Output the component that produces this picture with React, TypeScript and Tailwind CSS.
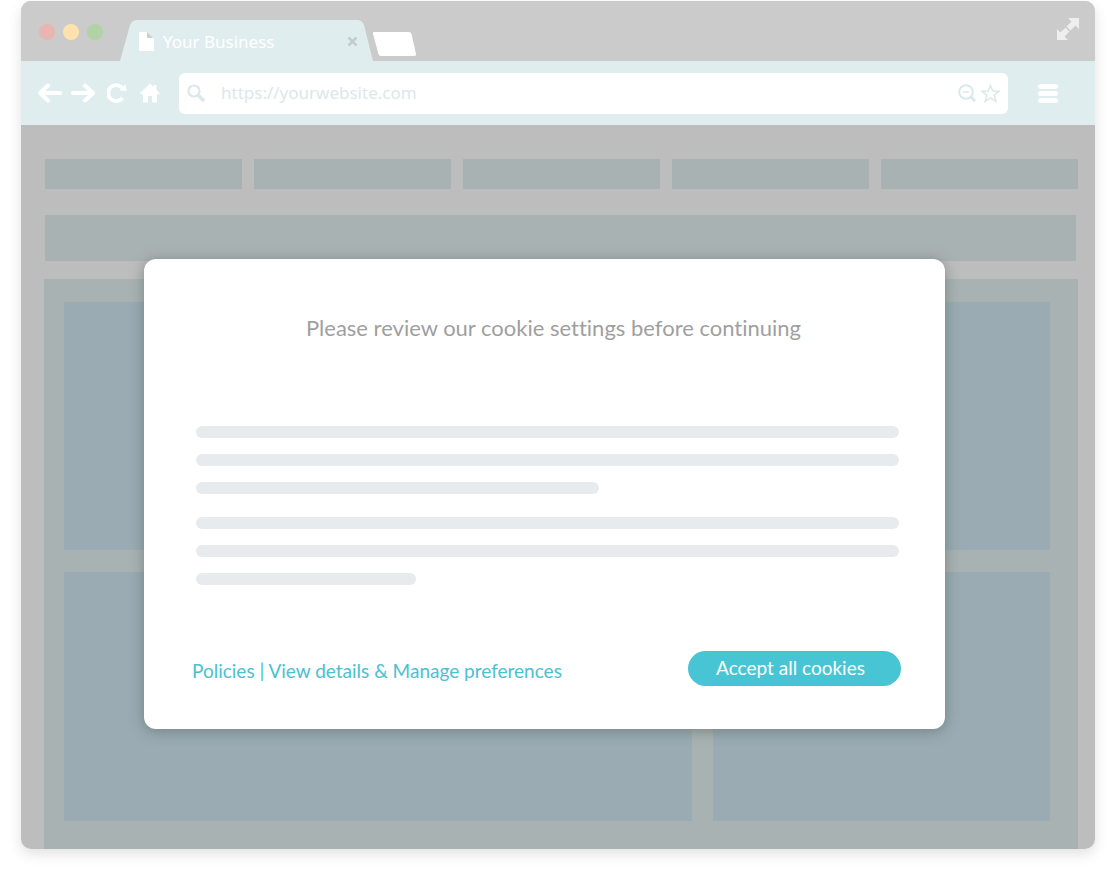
import type { JSX } from "react";

const NAV_ITEMS = ["one", "two", "three", "four", "five"];

const PARAGRAPHS = [
  ["w-full", "w-full", "w-[403px]"],
  ["w-full", "w-full", "w-[220px]"],
];

function TabStrip(): JSX.Element {
  return (
    <div className="flex h-[60px] items-end bg-[#cbcbcb] pl-[18px]">
      <div className="flex gap-2 self-start pt-[23px]">
        <span className="size-4 rounded-full bg-[#e9b5b0]" />
        <span className="size-4 rounded-full bg-[#fde2ae]" />
        <span className="size-4 rounded-full bg-[#b2d1a5]" />
      </div>

      {/* Active tab */}
      <div className="relative ml-[17px] h-[41px] w-[253px]">
        <svg className="absolute inset-0 size-full" viewBox="0 0 253 41" aria-hidden="true">
          <path d="M0 41 L10 5 Q12 0 17 0 H237 Q242 0 244 5 L253 41 Z" fill="#e0edef" />
        </svg>
        <div className="relative flex h-full items-center pt-[2px] pl-[19px]">
          <svg className="mr-[9px] h-[19px] w-[15px]" viewBox="0 0 15 19" aria-hidden="true">
            <path d="M0 0 H8 V6 H15 V19 H0 Z" fill="#fff" />
            <path d="M8 0 L14 6 H8 Z" fill="#cbd0d0" />
          </svg>
          <span className="font-['Noto_Sans','Open_Sans',sans-serif] text-[17px] text-white">
            Your Business
          </span>
          <button type="button" aria-label="Close tab" className="absolute top-4 left-[227px]">
            <svg className="size-[11px]" viewBox="0 0 11 11" aria-hidden="true">
              <path d="M1.5 1.5 L9.5 9.5 M9.5 1.5 L1.5 9.5" stroke="#c5cccd" strokeWidth="2.5" />
            </svg>
          </button>
        </div>
      </div>

      <button type="button" aria-label="New tab" className="mb-[5px]">
        <svg className="h-6 w-[43px]" viewBox="0 0 43 24" aria-hidden="true">
          <path d="M1 0 H36 Q38 0 38.500 2 L43 22 Q43.300 24 41 24 H8 Q6 24 5.500 22 L0 2 Q-.5 0 1 0 Z" fill="#fff" />
        </svg>
      </button>

      <button type="button" aria-label="Full screen" className="mr-4 mb-[21px] ml-auto">
        <svg className="size-[22px]" viewBox="0 0 22 22" aria-hidden="true">
          <path
            d="M11 0 H22 V11 L18.500 7.500 L13.500 12.500 L9.500 8.500 L14.500 3.500 Z M0 11 L3.500 14.500 L8.500 9.500 L12.500 13.500 L7.500 18.500 L11 22 H0 Z"
            fill="#eeeeee"
          />
          <path d="M8 9 L13 14" stroke="#d8d8d8" strokeWidth="1" />
        </svg>
      </button>
    </div>
  );
}

function Toolbar(): JSX.Element {
  return (
    <div className="flex h-16 items-center bg-[#e0edef] pr-[37px] pl-4">
      <div className="flex items-center gap-[9px] text-white">
        <button type="button" aria-label="Back">
          <svg className="h-5 w-[25px]" viewBox="0 0 25 20" fill="none" stroke="currentColor" strokeWidth="4" strokeLinecap="round" strokeLinejoin="round" aria-hidden="true">
            <path d="M23 10 H4" />
            <path d="M11 2.500 L3 10 L11 17.500" />
          </svg>
        </button>
        <button type="button" aria-label="Forward">
          <svg className="h-5 w-[25px]" viewBox="0 0 25 20" fill="none" stroke="currentColor" strokeWidth="4" strokeLinecap="round" strokeLinejoin="round" aria-hidden="true">
            <path d="M2 10 H21" />
            <path d="M14 2.500 L22 10 L14 17.500" />
          </svg>
        </button>
        <button type="button" aria-label="Reload" className="ml-[2px]">
          <svg className="size-5" viewBox="0 0 20 20" aria-hidden="true">
            <path d="M15.500 15 A8 8 0 1 1 15 4.500" fill="none" stroke="currentColor" strokeWidth="3.800" />
            <path d="M18.500 1 L19.500 8 L12.500 7.500 Z" fill="currentColor" />
          </svg>
        </button>
        <button type="button" aria-label="Home" className="ml-1">
          <svg className="size-5" viewBox="0 0 20 20" fill="currentColor" aria-hidden="true">
            <path d="M10 .5 L13.500 4 V2 H16.500 V7 L20 10.500 L18.500 11.500 L17 10.500 V19.500 H12 V13 H8 V19.500 H3 V10.500 L1.500 11.500 L0 10.500 Z" />
          </svg>
        </button>
      </div>

      <div className="ml-[19px] flex h-[41px] flex-1 items-center rounded-md bg-white px-2 text-[#dbe8ea]">
        <svg className="size-[19px]" viewBox="0 0 19 19" fill="none" stroke="currentColor" aria-hidden="true">
          <circle cx="7" cy="7" r="5.500" strokeWidth="2.200" />
          <path d="M11.500 11.500 L17 17" strokeWidth="3.500" />
        </svg>
        <input
          type="text"
          aria-label="Address"
          defaultValue="https://yourwebsite.com"
          className="ml-[15px] min-w-0 flex-1 bg-transparent font-['Noto_Sans','Open_Sans',sans-serif] text-[17px] outline-none"
        />
        <button type="button" aria-label="Zoom out">
          <svg className="size-[18px]" viewBox="0 0 18 18" fill="none" stroke="currentColor" aria-hidden="true">
            <circle cx="8" cy="8" r="6.800" strokeWidth="2" />
            <path d="M5 8 H11" strokeWidth="1.500" />
            <path d="M13 13 L17 17" strokeWidth="3" />
          </svg>
        </button>
        <button type="button" aria-label="Bookmark" className="ml-[5px]">
          <svg className="size-[19px]" viewBox="0 0 19 19" fill="none" stroke="currentColor" strokeWidth="1.500" aria-hidden="true">
            <path d="M9.500 1.500 L11.800 7 L18 7.300 L13.200 11.100 L14.900 17.300 L9.500 13.900 L4.100 17.300 L5.800 11.100 L1 7.300 L7.200 7 Z" />
          </svg>
        </button>
      </div>

      <button type="button" aria-label="Menu" className="ml-[30px] flex w-5 flex-col gap-[2px]">
        <span className="h-[5px] w-full rounded-sm bg-white" />
        <span className="h-[5px] w-full rounded-sm bg-white" />
        <span className="h-[5px] w-full rounded-sm bg-white" />
      </button>
    </div>
  );
}

function PageSkeleton(): JSX.Element {
  return (
    <div className="pt-[34px] pr-[17px] pl-6">
      <div className="flex gap-3">
        {NAV_ITEMS.map((item) => (
          <div key={item} className="h-[30px] flex-1 bg-[#a9b2b3]" />
        ))}
      </div>
      <div className="mt-[26px] mr-[2px] h-[46px] bg-[#a9b2b3]" />
      <div className="mt-[18px] -ml-px grid grid-cols-[628fr_337fr] gap-x-[21px] gap-y-[22px] bg-[#a9b2b3] pt-[23px] pr-7 pb-7 pl-5">
        <div className="col-span-2 h-[248px] bg-[#9aabb3]" />
        <div className="h-[249px] bg-[#9aabb3]" />
        <div className="h-[249px] bg-[#9aabb3]" />
      </div>
    </div>
  );
}

function CookieDialog(): JSX.Element {
  return (
    <div
      role="dialog"
      aria-labelledby="cookie-title"
      className="absolute top-[134px] right-[150px] left-[123px] rounded-xl bg-white px-11 pt-[53px] pb-[43px] font-['Lato',sans-serif] shadow-[0_2px_14px_rgba(90,110,105,0.65)] [font-variant-ligatures:none]"
    >
      <h1 id="cookie-title" className="pl-[18px] text-center text-[22px] leading-8 text-[#9f9f9f]">
        Please review our cookie settings before continuing
      </h1>

      <div className="mt-[82px] mr-[2px] ml-2 flex flex-col gap-[23px]">
        {PARAGRAPHS.map((lines, i) => (
          <div key={i} className="flex flex-col gap-4">
            {lines.map((width, j) => (
              <div key={j} className={`h-3 rounded-full bg-[#e8ebed] ${width}`} />
            ))}
          </div>
        ))}
      </div>

      <div className="mt-[66px] flex items-center justify-between">
        <p className="mt-[5px] ml-1 text-[19px] leading-6 text-[#4bc1d0]">
          <a href="#policies">Policies</a> | <a href="#preferences">View details &amp; Manage preferences</a>
        </p>
        <button
          type="button"
          className="h-[35px] w-[213px] rounded-full bg-[#48c5d4] pr-2 pb-[2px] text-[19px] leading-6 text-white"
        >
          Accept all cookies
        </button>
      </div>
    </div>
  );
}

export default function App(): JSX.Element {
  return (
    <div className="min-h-screen bg-white pt-px pr-[15px] pb-11 pl-[21px]">
      <div className="rounded-[10px] shadow-[0_5px_14px_rgba(0,0,0,0.12)]">
        <div className="overflow-hidden rounded-[10px] bg-[#bdbdbd]">
          <TabStrip />
          <Toolbar />
          <main className="relative">
            <PageSkeleton />
            <CookieDialog />
          </main>
        </div>
      </div>
    </div>
  );
}
